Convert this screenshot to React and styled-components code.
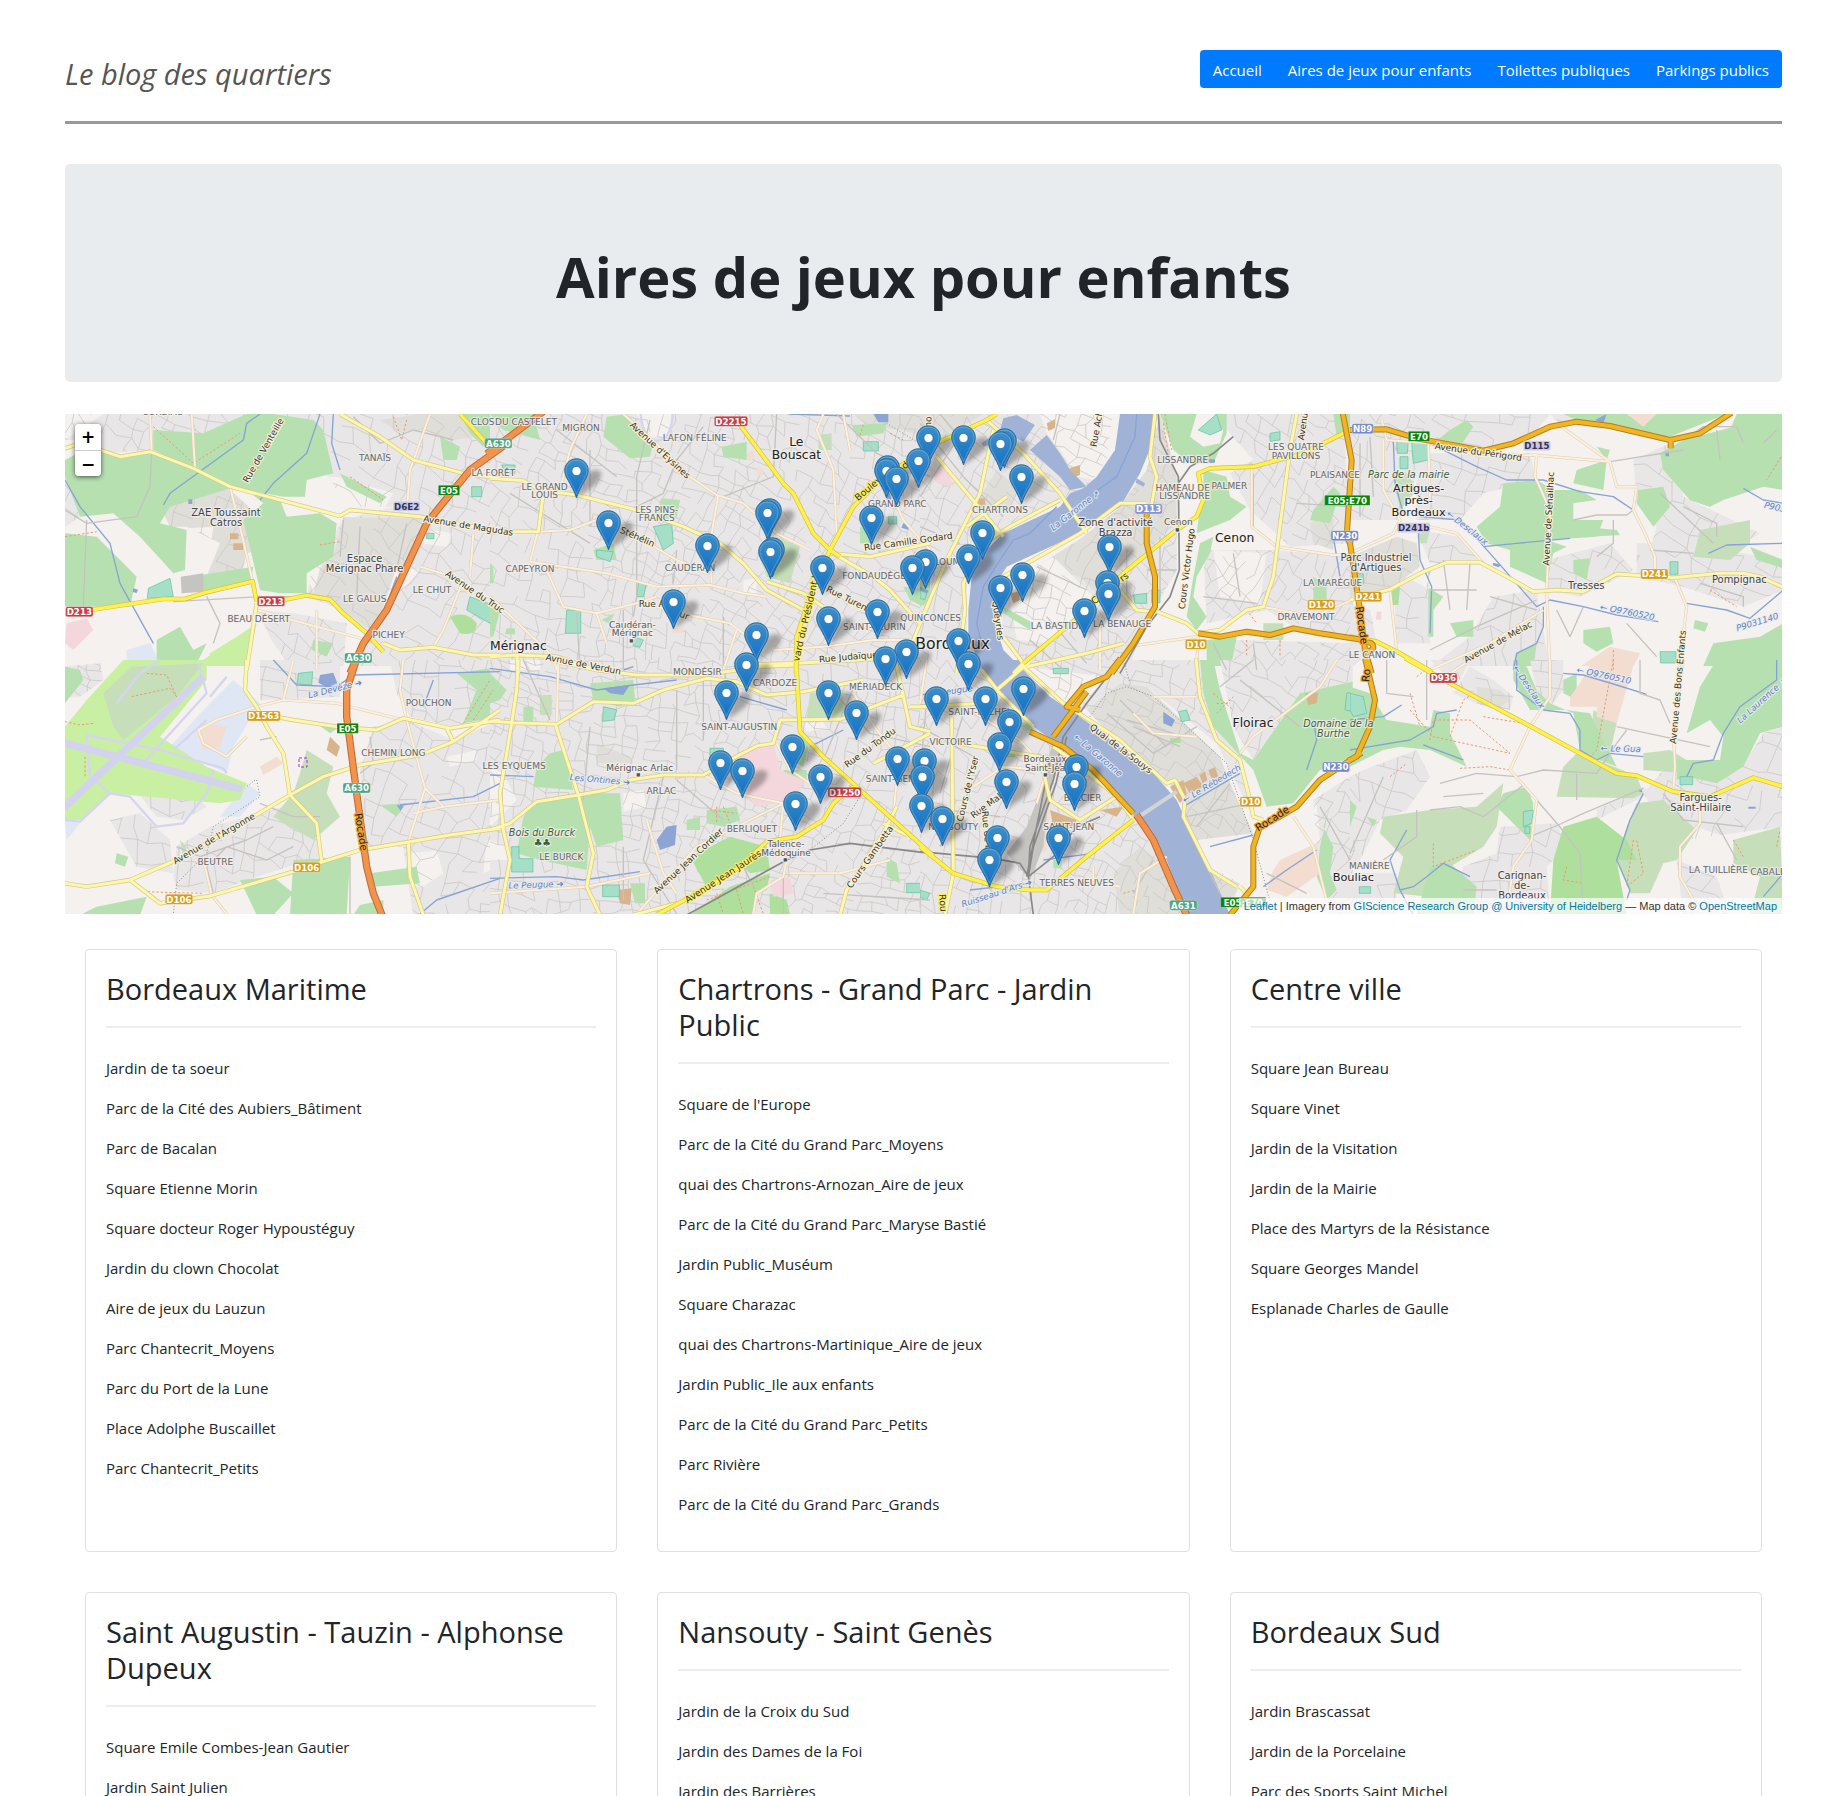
import React from "react";
import styled, { createGlobalStyle, css } from "styled-components";

const GlobalStyle = createGlobalStyle`
  *, *::before, *::after { box-sizing: border-box; }
  body {
    margin: 0;
    background: #fff;
    color: #212529;
    font-family: "Open Sans", "Noto Sans", sans-serif;
    font-size: 15px;
    line-height: 24px;
  }
`;

/* ---------- page ---------- */

const Page = styled.div`
  padding: 50px 62px 0 65px;
`;

const Header = styled.header`
  display: flex;
  justify-content: space-between;
  align-items: flex-start;
  height: 74px;
  border-bottom: 3px solid #999;
`;

const SiteName = styled.p`
  margin: 4px 0 0;
  color: #555;
  font-size: 29px;
  line-height: 40px;
  font-style: italic;
`;

const Nav = styled.nav`
  display: flex;
  background: #007bff;
  border-radius: 4px;
`;

const NavLink = styled.a`
  padding: 8px 13px 6px;
  color: #fff;
  text-decoration: none;
`;

const Banner = styled.section`
  margin-top: 40px;
  padding: 79px 32px 73px;
  background: #e9ecef;
  border-radius: 5px;
  text-align: center;
`;

const BannerTitle = styled.h1`
  margin: 0;
  font-size: 56px;
  line-height: 66px;
  font-weight: 700;
`;

const Columns = styled.div`
  display: grid;
  grid-template-columns: repeat(3, minmax(0, 1fr));
  gap: 40px;
  padding: 35px 20px 20px;
`;

const Card = styled.section`
  padding: 21px 20px 19px;
  border: 1px solid #dfdfdf;
  border-radius: 4px;
`;

const CardTitle = styled.h2`
  margin: 0 0 28px;
  padding-bottom: 19px;
  border-bottom: 2px solid #ededed;
  font-size: 29px;
  line-height: 36px;
  font-weight: 400;
`;

const Places = styled.ul`
  margin: 0;
  padding: 0;
  list-style: none;
`;

const Place = styled.li`
  margin-bottom: 16px;
`;

/* ---------- map ---------- */

const MapBox = styled.section`
  position: relative;
  height: 500px;
  margin-top: 32px;
  overflow: hidden;
  background: #f4f1ee;
`;

const MapDrawing = styled.svg`
  display: block;
  width: 100%;
  height: 100%;
`;

const ZoomBar = styled.div`
  position: absolute;
  top: 10px;
  left: 10px;
  display: flex;
  flex-direction: column;
  border-radius: 4px;
  box-shadow: 0 1px 5px rgba(0, 0, 0, 0.65);
  overflow: hidden;
`;

const ZoomButton = styled.button`
  width: 26px;
  height: 26px;
  padding: 0;
  border: 0;
  background: #fff;
  color: #000;
  font: 700 17px/24px "DejaVu Sans", sans-serif;
  & + & { border-top: 1px solid #ccc; }
`;

const Credits = styled.div`
  position: absolute;
  right: 0;
  bottom: 0;
  padding: 0 5px;
  background: rgba(255, 255, 255, 0.7);
  color: #333;
  font: 11px/16px "Liberation Sans", Arial, sans-serif;
  a { color: #0078a8; text-decoration: none; }
`;

const PinButton = styled.button`
  position: absolute;
  width: 25px;
  height: 41px;
  margin: -13px 0 0 -13px;
  padding: 0;
  border: 0;
  background: none;
  svg { display: block; }
`;

const labelKinds = {
  suburb: css`font-size: 27px; fill: #666; stroke: #f1efeecc;`,
  place: css`font-size: 30px; fill: #444;`,
  town: css`font-size: 34px; fill: #222;`,
  city: css`font-size: 37px; fill: #222;`,
  capital: css`font-size: 47px; fill: #222;`,
  station: css`font-size: 27px; fill: #555;`,
  stop: css`font-size: 13px; fill: #555;`,
  road: css`font-size: 27px; fill: #333; stroke: #f8f1d8;`,
  boulevard: css`font-size: 28px; fill: #333; stroke: #fdf060;`,
  ring: css`font-size: 31px; fill: #222; stroke: #f2a430;`,
  park: css`font-size: 29px; fill: #3c5f42; font-style: italic;`,
  water: css`font-size: 26px; fill: #6381b8; font-style: italic; stroke: #e8edf5cc;`,
};

const Label = styled.text`
  font-family: "DejaVu Sans", sans-serif;
  text-anchor: middle;
  paint-order: stroke;
  stroke: #f4f1eecc;
  stroke-width: 7px;
  stroke-linejoin: round;
  ${(p) => labelKinds[p.$kind]}
`;

const ShieldText = styled.text`
  font: 700 26px "DejaVu Sans", sans-serif;
  text-anchor: middle;
  fill: ${(p) => (p.$dark ? "#333355" : "#fff")};
`;

const areaFill = {
  urban: "#e8e6e6",
  works: "#dfded9",
  light: "#f4f1ee",
  forest: "#b7e0b1",
  scrub: "#c6dfba",
  bright: "#aedf9d",
  airfield: "#c9efa3",
  apron: "#dfe7f4",
  pitch: "#a6dfc8",
  heath: "#f2ddd0",
  clinic: "#f3d7dc",
  yard: "#c6c4c1",
  brown: "#d8b48c",
  lake: "#8ca5d4",
  river: "#a0b3d7",
};

const lineStyle = {
  water: [["#86a3d6", 4]],
  path: [["#e99a6b", 3, "7 6"]],
  edge: [["#8d8d8d", 3, "3 6"]],
  minor: [["#c6c2c0", 4]],
  taxi: [["#d6d5f1", 7]],
  runway: [["#d3d2ef", 22]],
  tertiary: [["#dccdb8", 9], ["#fdf0da", 6]],
  rail: [["#888", 5]],
  secondary: [["#d3c98c", 13], ["#fdf6ab", 9]],
  primary: [["#cfc04c", 14], ["#fff04c", 10]],
  trunk: [["#b27f1c", 18], ["#f1b524", 12]],
  motorway: [["#bd6a34", 22], ["#f2934d", 16]],
  bridge: [["#d3d4da", 12]],
};

const areaOrder = ["apron", "airfield", "scrub", "forest", "bright", "heath", "clinic", "yard", "brown", "river", "lake", "pitch"];
const lineOrder = ["taxi", "runway", "water", "edge", "path", "minor", "bridge", "tertiary", "rail", "secondary", "primary", "trunk", "motorway"];

/* Each sheet covers 440 x 260 map units, drawn at three times that scale. */
const sheets = [
  {
    x: 60, y: 410, angle: 24, cell: 44,
    areas: {
      urban: "M15,90V12H560L540,60L480,50L430,90L380,180L280,120L130,130L60,90Z M15,200L70,290L60,320L15,350Z M600,12H1320V780H880L920,670L850,600L740,560L760,470L850,330L1000,290L860,290L800,190L780,60Z M590,600L700,610L860,640L850,780H700L640,700Z",
      light: "M15,12H130L60,60L15,90Z M660,250L740,255L740,205L830,200L1000,250L970,300L860,300L800,360L750,350L690,320Z M380,355L460,350L440,490H375Z M740,490L790,440L760,550Z M1120,360L1180,370L1160,410L1080,400Z M1010,470L1080,480L1010,560L960,620Z",
      works: "M850,322L1090,325L1040,480L930,660L850,600L750,550V500L820,440Z M300,290L420,240L500,230L610,330L600,420L560,430L540,510L440,500L480,400L380,350H330Z M960,30L1080,12H1200L1250,80L1180,90L1090,60L1020,70Z",
      forest: "M280,60L430,70L560,12H640L760,30L790,60L820,190L740,210L735,260L670,260L510,230L400,175L280,120Z M15,150L90,110L160,140L280,130L400,180L510,235L430,260L330,290L300,340L380,360L375,480L340,490L240,380L160,310L60,320L15,200Z M560,240L660,270L680,320L780,310L830,340L820,440L740,490V550L660,550L600,540L550,330L610,280Z M15,370L110,380L190,460L230,500L210,590H15Z M1200,12H1320V60L1270,110L1230,70Z M390,500L580,470L570,515L430,545Z M840,190L900,220L980,260L960,280L860,230Z M1140,80L1200,110L1190,150L1150,150Z M290,690L360,650L400,720L440,700L400,780H290Z M760,690L820,700L800,740L755,720Z",
      airfield: "M400,770L590,640L560,780H390Z M450,730L580,650L540,740L440,780Z",
      apron: "M200,720L270,700L300,760L280,780H200Z",
      clinic: "M20,640L80,625L100,660L70,690L40,720L15,700Z",
      brown: "M510,370h25v18h-25z M520,400h30v20h-30z",
      yard: "M362,500L430,490V545L365,550Z",
      pitch: "M265,535L330,505L340,560L262,565Z M1235,230h30v30h-30z M1230,560L1310,590L1290,640L1220,600Z M1100,370h22v16h-22z",
      bright: "M1170,620Q1220,600 1250,640Q1250,680 1200,670Z",
      lake: "M385,268h12v14h-12z M220,535l14,4-4,10-12-3z",
    },
    lines: {
      water: "M15,210L60,290L150,400L180,520L280,700 M310,285L330,250L550,90L560,40L600,12 M820,12L815,100L840,180 M600,270L640,220L740,130L780,12 M1010,500L960,640",
      path: "M280,50L400,160L540,70 M580,200L650,60 M15,380L110,365 M780,405L840,395 M870,200L970,270 M1000,20L1025,90L1040,30",
      minor: "M275,125L270,230L230,320L80,340L15,300 M80,330L70,590 M740,560L600,560L340,575 M440,560L480,640L460,700 M1180,90L1060,60L960,100L880,20 M850,330L840,440 M900,350L890,560 M1040,340L1010,480",
      tertiary: "M270,12L275,125 M395,12L405,175 M510,230L540,350L578,514 M1110,12L1050,180L1040,310 M590,600L770,650L960,700 M1080,470L1210,510L1150,660L1120,710 M1240,370L1230,500 M770,600V780",
      secondary: "M15,115L60,100L180,140L270,125L400,175L510,230L840,318L870,300L1080,320L1320,365 M840,12L960,80L1060,150L1210,190L1320,205 M590,580L575,680L560,780 M970,700L1020,720L1120,712L1240,735H1320",
      primary: "M15,612L110,597L310,567H375L435,548L578,514L590,575 M660,572L740,556L810,568L850,610L920,670L970,725 M1200,12L1280,100",
      motorway: "M1330,108L1230,180L1140,290L1100,340L980,600L910,700L870,790",
    },
    labels: [
      [307, 16, "CORBIAC", "suburb"], [610, 130, "Rue de Venteille", "road", -60], [945, 154, "TANAÏS", "suburb"],
      [1268, 44, "CLOS", "suburb"], [1300, 198, "LA FORÊT", "suburb"], [498, 319, "ZAE Toussaint", "place"], [498, 349, "Catros", "place"],
      [914, 456, "Espace", "place"], [914, 486, "Mérignac Phare", "place"], [1116, 549, "LE CHUT", "suburb"], [914, 577, "LE GALUS", "suburb"],
      [596, 636, "BEAU DÉSERT", "suburb"], [986, 685, "PICHEY", "suburb"], [1225, 356, "Avenue de Magudas", "road", 9], [1245, 555, "Avenue du Truc", "road", 34],
    ],
    shields: [[1167, 241, "E05", "e"], [1040, 289, "D6E2", "t"], [58, 605, "D213", "p"], [633, 574, "D213", "p"], [895, 744, "A630", "m"]],
  },
  {
    x: 60, y: 660, angle: 12, cell: 44,
    areas: {
      urban: "M15,20L120,10L130,60L60,110H15Z M340,650L350,560L450,500L600,460L700,430L780,500V590L560,660L460,700L350,690Z M940,200L1040,180L1180,240L1320,180V770H1060L1030,560L920,560L900,330Z M990,0H1320V170L1180,200L1050,170L1010,100Z M600,0H840V110L600,120Z M150,480L240,460L330,540L340,640L230,620Z M220,380L300,360L400,400L440,440L370,480L290,470Z",
      light: "M1050,580L1130,570L1150,640L1090,680H1055Z M1280,540H1320V620L1270,640Z M1160,290L1250,270V300L1170,320Z",
      airfield: "M15,300V200L80,120L190,0H440L440,60L300,230L440,320L560,370L540,420L480,430L150,400L60,480L15,480Z",
      apron: "M330,260L430,150L520,60L600,130L520,260L500,340Z M560,370L600,400L540,470L480,470Z M15,480L60,490L20,540Z",
      scrub: "M215,20L430,10L350,110L190,240L160,200L130,100Z M740,270L820,320L800,400L840,470L760,540L640,470L700,400L720,340Z M360,540L380,560L370,590Z",
      forest: "M15,20L60,30L70,60L15,130Z M700,600L870,590L860,765H690Z M540,660L640,650L700,700L640,765H590Z M930,640L1070,620L1080,670L940,680Z M110,740L260,710L240,765H60Z M770,190L840,200L810,220Z M900,735L970,720V765H880Z M1190,40L1320,20V170L1210,190L1250,90Z M170,580L205,590L195,620L165,610Z M960,435L1040,430L1010,470Z",
      brown: "M810,230L840,260L830,290L800,270Z",
      heath: "M430,190L500,200L480,260L430,270L415,230Z M600,320L650,290L670,310L610,345Z",
      pitch: "M715,40L758,35L755,75L712,72Z",
      lake: "M780,45L820,38L832,70L800,82L775,68Z M1010,435l20,2-8,16z",
    },
    lines: {
      runway: "M10,248L545,388 M10,445L430,50",
      taxi: "M15,480L60,485L150,400L210,410L290,500L370,490L440,400L460,330 M80,225L300,270L490,325L500,340 M240,320L440,100L415,10 M80,225L90,350L150,400 M170,130L240,40L300,0 M340,270L440,180 M450,110L500,50",
      water: "M640,0L710,75L830,80L880,45L1320,35 M1020,435L1240,410L1320,370 M1080,762L1130,720L1320,655 M1120,60L1090,140",
      path: "M215,110L330,85L350,110 M15,185L60,195L100,190 M75,290V350 M250,695L430,700 M260,40L320,45L350,110 M1210,190L1290,60 M1240,180L1300,90",
      edge: "M590,360L600,410L460,500L440,580L350,670L340,762 M585,360L560,380",
      minor: "M350,560L420,590L560,540L640,500 M460,700L440,620L500,560L620,600L700,560 M870,590V762 M930,230L940,310L900,340 M600,240L650,230 M600,430L700,470L780,470",
      tertiary: "M700,0L670,120L830,130L1030,180 M670,120L590,140 M430,250L415,210L470,180L590,140 M430,250L500,290L560,230 M1030,0L1020,90L1040,180L1095,385L1045,545 M430,600L455,705L500,762 M1095,385L1150,440L1320,420 M1150,440L1060,460",
      secondary: "M15,670L80,680L210,660L350,600L580,470L690,405L790,350L900,315L1080,285L1180,245L1320,150 M210,660L300,730L450,708L700,635L790,605L900,570L1050,545L1170,525L1320,505 M560,0L555,90L590,140L620,200L670,280L690,405L770,490L785,605 M590,160L700,180L830,200L950,210L1030,175L1170,205L1320,180 M1045,545L1050,650L1090,765 M1160,205L1180,245",
      motorway: "M892,-10L860,90V170L890,400L920,620L940,700L968,770",
    },
    labels: [
      [825, 95, "La Devèze ➔", "water", -14], [1106, 137, "POUCHON", "suburb"], [1000, 288, "CHEMIN LONG", "suburb"],
      [462, 545, "Avenue de l'Argonne", "road", -30], [466, 615, "BEUTRE", "suburb"], [902, 525, "Rocade", "ring", 81],
    ],
    shields: [[611, 168, "D1563", "s"], [863, 205, "E05", "e"], [890, 384, "A630", "m"], [740, 622, "D106", "s"], [357, 718, "D106", "s"]],
  },
  {
    x: 490, y: 410, angle: 22, cell: 33,
    areas: {
      urban: "M-5,0H1330V790H-5Z",
      works: "M1100,12H1320V90L1240,60L1130,50Z",
      light: "M760,510L800,505V550L760,555Z M1210,395h40v30h-40z M440,12h110l-20,70h-50z",
      forest: "M350,20L410,12L490,100L480,140L420,145L340,80Z M0,12H130L150,90L40,60Z M695,110L770,95V150L700,140Z M1085,45L1190,40L1180,70L1100,80Z M515,265L570,270L560,320L500,330Z M1240,530L1320,540V600L1260,570Z M0,460L10,470V520H0Z M0,590L30,600L10,680H0Z M310,420L370,400L380,450L320,450Z M335,630l40-20-20,30z M50,655h25v18H45z M1110,350L1160,370L1150,400L1110,400Z",
      scrub: "M985,75L1025,70V120H985Z M860,380L930,410L900,520L830,500L810,440Z",
      pitch: "M490,350L545,340L550,400L520,420Z M230,600h42v70h-46z M35,165l40,0 0,25-30,0z M1120,95h45v28h-45z M320,420L370,425L360,455L320,440Z M445,520h25l-10,40h-20z M430,680l30,10-10,22-20-5z M1195,320h25v22h-25z",
      lake: "M1150,12h45v25h-30z M1190,235h15v35h-15z M1240,340l20,5-6,14-20-6z",
      heath: "M770,130l20-8 6,22-20,8z M800,175h20v20h-20z M548,655h30v15h-30z",
    },
    lines: {
      water: "M900,12L1080,18 M400,780L430,770",
      path: "M1110,75L1120,45 M1200,70L1240,90",
      minor: "M480,30L440,200V560L430,620 M640,50L560,150L520,250L420,300 M860,12L850,200L700,260 M1040,12L1160,130L1320,200 M60,250L300,400 M300,120V350 M200,60L380,200 M560,420L550,520 M700,620V780 M260,610L270,780 M400,600V780",
      edge: "M1190,40L1280,95",
      taxi: "M452,12Q460,95 505,92Q545,85 548,12",
      tertiary: "M290,12L240,120L210,240 M400,12L520,120L600,200L680,255L760,280L860,370L960,420 M685,255L660,400L665,520 M0,370L145,365L240,360L320,330L400,355L560,450L650,490 M120,455L350,490L500,530L660,525L760,550L830,560 M120,455L160,300 M165,470L220,590L320,610L440,580L500,560 M500,590L620,620L720,640L800,700 M1000,12L980,60L1030,180L1040,370 M850,720L1000,710L1150,690H1280 M740,660L700,780 M320,610L350,700 M1080,120L1060,12 M1180,200L1240,330L1320,420 M200,780L190,740L0,560",
      secondary: "M0,205L100,212L150,240L260,255L440,300L580,350L690,400L760,460L830,540L940,600 M0,365H145L160,250 M1020,425L1150,500L1200,540L1290,640 M830,515L940,550L1000,590 M85,790L80,735L200,740L320,780 M80,735L0,740 M1020,430L1140,440L1320,400 M730,765L920,760L1200,745L1320,700 M1270,690L1320,570",
      primary: "M750,45L880,220L910,250L970,370L1020,420L1050,440 M1020,420L960,560L920,680L918,790 M1020,420L1090,290L1180,200L1260,150L1330,90",
      motorway: "M160,5L-10,132",
    },
    labels: [
      [108, 44, "DU CASTELET", "suburb"], [273, 62, "MIGRON", "suburb"], [510, 130, "Avenue d'Eysines", "road", 43], [614, 94, "LAFON FÉLINE", "suburb"],
      [919, 107, "Le", "city"], [919, 146, "Bouscat", "city"], [164, 239, "LE GRAND", "suburb"], [164, 264, "LOUIS", "suburb"],
      [500, 309, "LES PINS-", "suburb"], [500, 334, "FRANCS", "suburb"], [442, 390, "Stéhélin", "road", 24], [120, 487, "CAPEYRON", "suburb"],
      [600, 483, "CAUDÉRAN", "suburb"], [485, 590, "Rue A", "road"], [575, 622, "eur", "road", 20], [427, 653, "Caudéran-", "station"], [427, 679, "Mérignac", "station"], [424, 697, "■", "stop"],
      [85, 719, "Mérignac", "city"], [950, 625, "vard du Président W", "boulevard", -77], [1135, 245, "Boulev", "boulevard", -40], [1245, 175, "d", "boulevard", -40],
      [1222, 290, "GRAND PARC", "suburb"], [1255, 404, "Rue Camille Godard", "road", -8], [1152, 506, "FONDAUDÈGE", "suburb"], [1085, 582, "Rue Turenne", "road", 27],
      [1153, 659, "SAINT-SEURIN", "suburb"], [1075, 750, "Rue Judaïque", "road", -5], [280, 772, "Avnue de Verdun", "road", 11], [1322, 634, "QUINCONCES", "suburb"], [1315, 45, "no", "road", -88],
    ],
    shields: [[25, 100, "A630", "m"], [723, 34, "D2215", "p"]],
  },
  {
    x: 490, y: 660, angle: 10, cell: 33,
    areas: {
      urban: "M-5,0H1330V770H-5Z",
      light: "M0,320L40,340L80,420L0,500Z M400,400L460,390L470,440L400,455Z M60,0h90v30h-90z M0,540L60,560V600H0Z M940,190l60-4 10,20-60,10z",
      works: "M320,250L420,290L430,310L320,310Z",
      forest: "M300,70L430,60L435,120L390,140L310,120Z M140,320L180,280L220,270L240,340L250,390L130,380Z M130,430L250,400H390L400,540L320,560L300,500L290,630L150,600L80,580L100,470Z M590,480L630,470L630,510L590,510Z M650,450L740,440L750,480L700,500L650,490Z M0,40L50,90L30,120L0,130Z M100,140h30v45h-30z M880,330h70v30h-60z M420,670h45v60h-30z M930,230l30,10-20,80-20-10z M1190,590l30,20 10,60-40-20z",
      scrub: "M960,100L1060,90V170L950,175Z M150,105h35v60h-35z",
      bright: "M600,590L720,530L830,560L840,630L780,640L760,620L650,680Z M600,765L720,680L840,640L830,690L800,700L790,765Z M840,700L890,720L900,765H840Z",
      clinic: "M720,290L850,250L870,330L940,360L920,420L800,440L760,400L800,350Z M840,660L900,650L910,700L850,710Z",
      heath: "M780,370L840,350L820,410L780,420Z",
      brown: "M380,690l45-5-5,50-30-5z",
      lake: "M500,540L530,500L560,495L555,555L510,570Z M340,85L420,75L400,105L360,100Z",
      pitch: "M65,560h22v36h42v40H65z M340,140l40,10-8,30-34,4z M338,675h50v35h-50z M1250,670h50v28h-50z M660,265h40v30h-40z",
    },
    lines: {
      water: "M0,25L180,50L320,90L430,75L560,60 M750,110L890,150 M0,655L200,650L280,660L450,635 M960,260L1060,210 M0,345L130,350",
      path: "M650,720L840,650 M680,700L700,762 M740,690L760,762 M790,680L820,762 M660,450L740,460 M680,440V490 M700,440L720,490",
      minor: "M100,0L180,180 M300,200L280,420 M520,350L460,600L560,762 M560,360L700,480 M560,90V330 M640,60V240 M400,560V720 M1000,60L1140,220L1320,260 M1100,60L1000,300 M880,650V762 M700,20L720,120 M760,620L790,680 M1000,700L1320,720",
      edge: "M960,570L1060,490L1110,410",
      tertiary: "M205,0L200,190 M440,762L620,560L880,430 M470,480L520,640L560,700 M890,600L880,650L800,700L790,762 M0,700L290,680L480,640 M860,250L900,330L960,370 M900,640L1050,640L1200,600 M640,345L740,400L880,430 M880,430L870,540 M1090,100L1160,210L1240,310 M1220,360L1210,470",
      secondary: "M85,0L80,90L65,190L30,400L40,510L60,600L30,765 M0,183L65,188L200,193L310,125L430,130L520,90L650,55L740,65L830,105L940,95L1120,60 M195,190L265,405L310,580L290,680L330,765 M0,510L60,490L140,425L265,405L350,390L420,360L520,345H640L720,300L800,258L850,250L870,180L1050,178L1240,105 M180,0L320,30L440,45H640L810,20L920,15 M1050,765L1070,690L1180,520L1220,440 M1180,490L1250,525 M1215,-5L1260,200L1320,215 M1150,310L1320,220 M430,765L560,730 M1260,140H1320",
      primary: "M918,-5L930,215L1000,290L1100,380L1330,588 M500,765L640,690L750,620L830,545L920,530L1000,480L1030,430L1090,380",
      rail: "M590,765L890,600L960,570L1080,550L1320,580",
    },
    labels: [
      [622, 44, "MONDÉSIR", "suburb"], [855, 78, "CARDOZE", "suburb"], [1157, 89, "MÉRIADECK", "suburb"], [748, 209, "SAINT-AUGUSTIN", "suburb"],
      [72, 326, "LES EYQUEMS", "suburb"], [449, 332, "Mérignac Arlac", "station"], [445, 348, "■", "stop"], [330, 368, "Les Ontines ➔", "water", 5], [514, 403, "ARLAC", "suburb"],
      [1140, 272, "Rue du Tondu", "road", -36], [1218, 367, "SAINT-GENÈS", "suburb"], [156, 528, "Bois du Burck", "park"], [157, 558, "♣♣", "park"],
      [214, 601, "LE BURCK", "suburb"], [138, 683, "Le Peugue ➔", "water", -2], [786, 515, "BERLIQUET", "suburb"], [595, 612, "Avenue Jean Cordier", "road", -43],
      [700, 659, "Avenue Jean Jaurès", "boulevard", -33], [888, 561, "Talence-", "station"], [888, 587, "Médoquine", "station"], [886, 603, "■", "stop"], [1140, 600, "Cours Gambetta", "road", -55],
    ],
    shields: [[1064, 397, "D1250", "p"]],
  },
  {
    x: 920, y: 410, angle: 30, cell: 34,
    areas: {
      urban: "M-5,0H580L560,150L500,230L420,270L250,360L180,430L140,520V790H-5Z M560,370L660,440L770,340V480L700,600L620,780H330L250,680L240,520L400,440Z M850,420H1080L1040,600L860,640Z M880,12H1270L1290,400L1110,410L990,300L930,190L1000,150Z M1050,420L1320,440V690L1120,650L1040,600Z M940,690L1320,700V790H940Z",
      light: "M360,12H590L570,140L520,210L470,200L420,120L380,70Z M260,510L400,440L520,560L400,700L290,690Z M880,420L1040,430L1020,580L900,560Z",
      works: "M590,300L680,180L720,12L770,200V340L660,440L540,560L480,500L350,470L490,380Z M0,12H190L60,90L0,80Z M170,280L230,180L300,240L260,300Z M1170,340L1240,310V420L1180,400Z",
      forest: "M720,12H830L810,80L850,110L900,100L910,60L880,40L890,12H920V70L880,160L810,160L760,120Z M850,180L920,200L930,260L980,290L930,330L830,370L850,220Z M840,400L880,380L870,430L830,500L820,560L860,620L830,660L800,620L820,500Z M1180,300L1240,230L1260,250L1230,340L1170,330Z M860,690L950,680L930,790H860Z M250,590L340,640L330,660L250,610Z M0,490L30,500V570L0,590Z M1240,12H1320V60L1250,80Z M1180,500L1220,530V570H1180Z",
      scrub: "M150,540h30v10h-30z M1030,640L1090,640V690H1030Z",
      river: "M600,12L585,120L530,200L490,235L450,250L420,290L250,370L190,430L155,500L145,600V680L190,790H320L250,720L225,640V590L235,510L260,470L480,370L600,290L660,190L705,80L710,12Z M250,25L290,15L345,45L310,95L240,60Z M330,120L380,75L420,130L450,180L500,230L450,240L420,200Z M185,100L240,60L250,95L190,110Z M650,205l25,15-4,10-24-12z",
      brown: "M448,175L480,165V195L455,205Z M380,40l25-12v25l-20,10z M270,550l25-5 5,25-20,10z M172,265h24v24h-24z",
      clinic: "M30,180L80,170L100,230L50,220Z",
      pitch: "M835,60L890,12L905,60L870,75Z M640,555L680,550V580H645Z M695,540h25v38h-25z M1050,70l30-5v25l-30,4z M0,540l20,10-6,20-14-6z",
      lake: "M865,148h20v10h-20z M0,530l26,12-8,14-18-8z",
    },
    lines: {
      water: "M650,12L645,80L590,200L520,250 M410,290L330,370L280,390L240,450L190,530L170,640L190,720 M1240,380L1260,500",
      path: "M730,40L745,130 M980,600L1010,640 M735,12L755,120 M980,690V740 M1080,690V740",
      minor: "M0,40L130,200L250,320 M60,12L150,120 M130,60L0,260 M0,350L120,400 M420,12L400,90 M350,470L500,540 M620,420V560 M520,560L640,420 M720,380V560 M680,480H770 M1000,190V360 M850,560L1010,580 M1130,280L1290,290 M940,430L960,560 M880,700L920,780 M1000,700L1010,780 M380,620L500,760 M330,690L430,780",
      tertiary: "M995,170V350L1070,410L1240,435H1320 M0,500L180,430 M1030,590L1180,620L1320,560 M835,670L830,780 M620,710L830,680 M540,620V780",
      rail: "M715,12L720,90L775,200L778,480L750,560L680,650L600,790 M775,220L810,170L880,130L940,80",
      secondary: "M200,30L310,130L420,250L500,370 M50,140L200,320L250,380 M220,60L180,250L80,450L0,640 M110,790L135,600L130,520L190,400L270,350L420,270 M250,500L480,370L600,280H680 M705,12L690,140L710,200L690,310 M700,600L800,640L835,670L900,660L980,600L1030,590L1060,500L1110,120L1130,12 M320,770L500,730L610,700 M700,605L650,600L600,540 M250,680L310,760L280,790 M260,260L140,350",
      primary: "M0,120L60,95L200,30L230,12 M310,760L500,600L610,490L770,360L830,320L850,270L835,190L870,175L1000,170L1150,130L1270,70",
      trunk: "M680,310V400L705,500V590L640,700L575,790 M835,670L900,680L980,665L1050,675L1120,655L1200,670L1330,690 M1268,8L1295,150L1280,380L1290,400",
    },
    labels: [
      [530, 65, "Rue Ach", "road", -80], [788, 158, "LISSANDRE", "suburb"], [788, 242, "HAMEAU DE", "suburb"], [794, 267, "LISSANDRE", "suburb"], [928, 238, "PALMER", "suburb"],
      [1128, 120, "LES QUATRE", "suburb"], [1128, 146, "PAVILLONS", "suburb"], [1245, 205, "PLAISANCE", "suburb"], [1150, 50, "Avenue", "road", -82],
      [240, 310, "CHARTRONS", "suburb"], [465, 310, "La Garonne ➚", "water", -38], [587, 347, "Zone d'activité", "place"], [587, 377, "Brazza", "place"], [775, 346, "Cenon", "station"], [772, 362, "■", "stop"],
      [944, 395, "Cenon", "city"], [800, 485, "Cours Victor Hugo", "road", -83], [82, 466, "LOUM", "suburb"], [612, 510, "rs", "boulevard", -38], [525, 580, "C", "boulevard", -38],
      [412, 658, "LA BASTIDE", "suburb"], [606, 652, "LA BENAUGE", "suburb"], [98, 716, "Bordeaux", "capital"], [234, 640, "Quéyries", "road", 82],
      [1238, 527, "LA MARÈGUE", "suburb"], [1158, 630, "DRAVEMONT", "suburb"], [1368, 452, "Parc Industriel", "place"], [1368, 482, "d'Artigues", "place"],
    ],
    shields: [[686, 297, "D113", "nt"], [1282, 271, "E05;E70", "e"], [1274, 377, "N230", "n"], [1204, 584, "D120", "s"], [828, 703, "D10", "s"]],
  },
  {
    x: 920, y: 660, angle: 28, cell: 34,
    areas: {
      urban: "M-5,0H170L230,90L340,200L470,290L600,430L680,500L740,600L790,770H-5Z M310,0H840L850,100L960,280L1000,470L890,250L680,80L600,70L500,150L380,90Z M900,0H1320V60L1140,100L1000,300L940,200Z M1180,420L1320,330V770H1230L1190,560Z",
      light: "M310,20L560,50L490,130L400,110Z M830,550L1000,520L1190,430L1200,540L1040,640L1000,690L870,630Z",
      works: "M500,150L600,70L680,80L900,290L930,370L1000,520L830,540L790,460L780,400L700,330L600,250Z M660,560L740,620L780,765H600L580,640Z M870,620L960,670L930,740L880,680Z",
      forest: "M840,0H880L900,90L960,280L1000,300L1140,100L1320,60V280L1200,330L1120,430L1040,440L1000,330L880,200L850,100Z M1230,440L1210,500L1240,560L1230,640L1250,690L1220,720L1190,650L1200,560Z M400,600h25v25h-25z M300,180L350,210L330,215L300,195Z",
      scrub: "M1200,260L1320,200V280L1200,330Z",
      heath: "M1080,600L1190,550L1200,640L1100,710L1040,690L1060,630Z M360,420L390,440L380,570L330,600L310,560Z",
      yard: "M320,500L360,400L400,240L425,270L385,420L370,560L330,660L260,580Z",
      brown: "M750,380L790,360L800,400L780,430Z M790,370L830,350L850,380L810,400Z M838,345L855,335L862,360L848,370Z M865,330L885,322L895,350L875,358Z M390,450L470,480L460,500L400,500Z M1155,100L1195,98L1190,130L1165,135Z M540,450L610,440L590,470Z",
      river: "M165,-5L230,90L340,200L470,290L600,430L680,500L740,600L780,720L792,765H930L880,650L820,530L770,420L700,340L600,260L480,170L390,110L310,30L300,-5Z",
      lake: "M730,155L765,180L755,200L730,190Z",
      pitch: "M775,155L800,150L810,180L785,185Z M400,25h45v16h-45z M1280,100L1320,90V160L1275,150Z M0,690l30,10-10,20-20-8z",
      bright: "M750,235h32v14h-32z M250,270h35v22h-35z",
    },
    lines: {
      water: "M0,105L100,90L150,80 M790,440L960,340 M870,560L1000,525 M1030,680L1100,630L1190,570 M150,690L240,680L330,670 M370,600L520,580 M1180,180L1190,240L1160,330",
      edge: "M510,170L560,100L620,80L700,110L800,200L920,310L1000,540L1060,762 M610,0L630,70",
      path: "M880,100L940,150 M890,130H930 M890,160L940,110 M610,700L650,690",
      minor: "M560,160L700,280L830,200 M620,180L760,220 M600,120L740,260 M780,260L640,200 M830,500L930,370 M800,470L990,430 M0,200L180,300 M20,120L0,350 M130,160L60,400 M180,330L60,560 M0,440L240,470 M960,60L1140,200 M1000,0L900,80 M1040,640L1160,700 M1200,440L1290,600 M640,700L700,600 M850,600L900,700",
      tertiary: "M20,0L0,130 M150,150L300,240L380,330L350,430 M640,160L700,220L830,230 M700,110H830 M1250,0L1200,80L1000,230L960,280 M160,380L250,320L380,330 M1120,470L1180,560L1230,762 M640,762L660,640L740,590 M520,620V660L600,680",
      bridge: "M660,468L770,395",
      rail: "M600,0L500,130L430,230L400,360L330,560L325,650L340,765 M440,230L408,370L340,560L325,650 M390,300L350,500L320,650 M0,575L220,595L300,610L325,650 M325,650L400,590L470,500L540,470",
      secondary: "M230,90L300,30L330,5 M185,30L240,100L340,200 M400,260L470,310L590,410L640,480 M310,20L430,130L600,240L740,370L765,360L795,420L790,470L870,630L950,680 M828,-5L840,110L890,240L960,300L985,400L1000,470L1030,480 M100,640L75,765 M95,170L100,640 M0,140L190,130L230,95 M110,250L360,290L390,420L480,480L590,410 M960,680L980,700",
      primary: "M640,480L500,590L380,690H330L230,680L100,640L0,560",
      trunk: "M602,-5L560,50L490,80L440,140L480,150 M500,95L400,230 M330,215L430,260L520,330L640,460 M1325,278L1200,360L1130,440L1070,475L1020,500L1000,560V680L930,765",
      motorway: "M650,465L700,540L760,680L802,770",
    },
    labels: [
      [110, 100, "Peugue", "water", -8], [180, 165, "SAINT-MICHEL", "suburb"], [92, 256, "VICTOIRE", "suburb"], [143, 395, "Cours de l'Yser", "road", -76], [218, 432, "Rue Malbec", "road", -36],
      [200, 520, "Rue de L", "road", 84], [380, 306, "Bordeaux-", "station"], [384, 332, "Saint-Jean", "station"], [376, 348, "■", "stop"], [488, 422, "BELCIER", "suburb"], [100, 511, "NANSOUTY", "suburb"],
      [446, 511, "SAINT-JEAN", "suburb"], [470, 679, "TERRES NEUVES", "suburb"], [230, 708, "Ruisseau d'Ars ➔", "water", -18], [535, 295, "← La Garonne", "water", 40], [603, 275, "Quai de la Souys", "road", 37],
      [999, 202, "Floirac", "city"], [1255, 201, "Domaine de la", "park"], [1240, 231, "Burthe", "park"], [875, 380, "← Le Rébedech", "water", -31], [1058, 486, "Rocade", "ring", -33], [1348, 626, "MANIÈRE", "suburb"], [1300, 662, "Bouliac", "town"], [68, 738, "Rou", "boulevard", 86],
    ],
    shields: [[1248, 321, "N230", "n"], [992, 425, "D10", "s"], [790, 736, "A631", "m"], [970, 727, "E05;E70", "e"]],
  },
  {
    x: 1350, y: 410, angle: 18, cell: 46,
    areas: {
      urban: "M0,12H600L560,60L420,120L250,90L140,330H0Z M230,130H540L560,210L400,250L330,330H200V200Z M200,360L330,380L400,460H240Z M590,450L780,400L850,480L690,560L590,540Z M850,150L960,100L1000,260L1230,370L1180,400L1030,440L900,420L920,350L860,280Z M430,560L560,540L600,780H230L360,680Z M860,400L1000,400L1300,450V540L1180,590L1000,530L860,500Z M130,480L240,540V700L140,700Z M0,580L60,600L80,700L0,780Z M600,12H700L640,50Z",
      works: "M0,440L140,380L200,400L210,470L100,550L0,560Z",
      forest: "M930,130L1000,90L1300,12V240L1240,230L1120,270L1080,290L1020,270L940,180Z M1160,12H1300V110L1140,60Z M640,12H1130L960,80L820,60L700,40Z M460,220L560,210L610,240L690,240L740,270L670,280V330H760L740,380L590,390L650,410L610,430L590,520L480,470V420L410,400L380,350L450,290Z M680,180L770,150L760,240L670,220Z M1090,700L1230,680L1300,640V790H1050Z M700,660L780,650L790,700L740,725L700,700Z M670,450L720,445L710,510L670,490Z M865,240L940,230L960,290L910,350L860,280Z M245,470L230,530L280,560L250,600V680L235,680V480Z M1035,630L1075,640L1065,665L1030,655Z M1200,410L1300,450V475L1220,450Z M300,640L370,630V680L320,680Z M350,30L370,50L330,110L250,100L300,60Z M740,110L780,120L770,150Z M700,350L800,360L810,375L720,380Z M500,730L560,700L550,780H490Z",
      scrub: "M1040,130L1130,140L1110,190L1080,290L1020,270Z M1200,140L1290,160L1250,220L1200,220Z M1050,360L1200,330V400L1140,450L1030,440Z M200,340L240,360L230,400L210,400Z M130,180L170,190L200,240L150,300L130,200Z",
      pitch: "M140,95L175,92L172,130L142,130Z M185,95L240,90L235,150L190,160Z M150,140h24v36h-24z M960,455h24v38h-24z M930,725h48v34h-46z M20,490l20,2v30l-20,4z",
      heath: "M690,770L780,710L870,730L840,790H690Z M830,12H920L880,50Z",
      bright: "M120,545L150,530L145,585H120Z",
      clinic: "M80,605h14v24h-16z",
      lake: "M735,30L770,12L760,40Z M430,458l22,6-6,8-18-6z M945,125h12v14h-10z",
    },
    lines: {
      water: "M240,100L380,170L470,210L580,210L690,245L790,260L850,300 M210,320L330,330L420,430L560,590L600,570L700,590L800,615L925,635 M400,410L500,400L660,385 M240,670L245,530L210,450L205,370 M1010,580L1130,600L1200,625L1300,540 M1075,430L1130,405L1300,400 M580,590V650L560,700L500,730L490,780 M1180,235L1240,270L1300,280 M130,95L135,220L160,310",
      path: "M1300,130L1250,210 M1080,540L1160,590 M790,720V780",
      minor: "M670,330L740,315H830L850,300 M740,440L790,400V330 M780,155L1000,120 M1000,90L1060,50H1160L1180,100 M1000,290L1100,340V380 M930,250L1090,400 M1100,60L1110,150 M900,420L1030,430 M1050,520L1180,560V590 M420,560L560,600 M280,450L300,600 M360,460L350,600 M240,540H380 M240,720L380,650L560,570 M620,600L660,680L700,590 M830,640L920,740 M1240,100L1280,60 M30,100V320 M60,80L70,260",
      tertiary: "M560,130L555,200L600,300L590,540L600,790 M110,90L240,100L400,140L550,135L780,155L800,230H860L850,300L885,370L915,440V490 M620,40L780,155 M975,505L1010,590L985,790 M240,350L320,370L400,460 M0,430L130,370L150,330L100,240V90 M580,600L420,700L240,780 M120,540L140,720 M235,100L240,260 M110,90L95,30",
      secondary: "M0,570L120,538L210,490L290,457H390L470,500L550,545L620,540L700,545L800,492L970,503L1110,490H1180L1230,500L1300,532",
      primary: "M0,680L80,695L150,730L245,785",
      trunk: "M0,60L110,58L200,85L400,122L490,100L600,50L680,35L780,48L960,90L1050,70L1145,8 M5,380L0,400L30,600L45,720L65,790 M962,90V115 M40,700Q70,690 70,715Q60,730 40,715",
    },
    labels: [
      [385, 135, "Avenue du Périgord", "road", 8], [176, 205, "Parc de la mairie", "park"], [206, 247, "Artigues-", "town"], [206, 283, "près-", "town"], [206, 318, "Bordeaux", "town"],
      [352, 362, "← Desclaux", "water", 38], [596, 335, "Avenue de Sénailhac", "road", -87], [709, 538, "Tresses", "place"], [1168, 518, "Pompignac", "place"], [832, 615, "← O9760520", "water", 11],
      [444, 705, "Avenue de Mélac", "road", -29], [66, 743, "LE CANON", "suburb"], [34, 655, "Rocade", "ring", 82], [50, 805, "Ro", "ring", -84], [1222, 645, "P9031140", "water", -17], [1275, 300, "P903", "water", 12],
    ],
    shields: [[38, 56, "N89", "n"], [207, 79, "E70", "e"], [561, 107, "D115", "t"], [191, 353, "D241b", "t"], [913, 492, "D241", "s"], [54, 560, "D241", "s"]],
  },
  {
    x: 1350, y: 660, angle: 15, cell: 46,
    areas: {
      urban: "M310,100L360,20L430,60L490,110L480,150L380,130Z M40,330L200,270L240,350L170,450L90,480L20,620H0V350Z M450,500L620,490L650,560L590,620L600,765H300L340,620L440,580Z M880,400L940,330H1170L1240,220L1300,200V500L1150,520L1000,540L900,430Z M540,0H640V90L600,140L560,90Z M740,450L880,380L900,400L740,480Z M240,0H360L330,60L280,40Z M980,600L1100,650L1140,765H1000Z M0,640H140V765H0Z",
      works: "M380,80L450,90L480,120L440,150L380,130Z",
      forest: "M0,80L60,100L110,180L240,200L250,150L300,160V220L350,320L240,270L150,260L100,270L0,320Z M490,0L530,20L560,90L600,130L670,160L690,270L720,290L800,320L780,280L740,200L720,160L650,150L540,150L490,60Z M1100,0H1300V200L1230,220L1180,320L1100,370L1010,350L980,360V300L1110,300L1120,230L1080,180L1010,220L1050,80Z M460,400L530,380L550,430L540,540L440,440Z M240,620L300,610L380,680L370,765H200Z M0,420L20,440L0,500Z M50,470L80,480L70,500Z M640,60L680,40V120L640,100Z",
      scrub: "M690,270L740,300L860,347L880,400L850,415L620,410L640,320Z M730,150L800,190L780,280L720,290Z M880,280L960,270L1010,300V340L880,330Z M100,470L240,450L380,440L460,370L440,500L400,560L300,620L240,710L130,700L160,590L90,520Z M860,430L940,420L1040,510L980,600L940,610L900,700H840L800,600L830,500Z M1150,540L1290,500L1300,765H1200L1230,650L1150,610Z",
      bright: "M640,500L740,470L830,540L860,600L800,600L830,765H600L610,600Z",
      light: "M1040,500L1150,540L1160,620L1040,620L1000,580Z M60,570L140,530L180,560L150,620L70,600Z",
      heath: "M690,70L730,0H855L800,190L740,170V140H660V110Z",
      pitch: "M520,455L550,450L545,490L520,500Z M0,100L40,110L50,160L10,170L0,150Z M990,350h38v24h-38z M28,680h34v20H28z M525,500h14v20h-14z",
      lake: "M1195,440h22v6h-22z M868,388h8v8h-8z",
    },
    lines: {
      water: "M0,270L60,260L180,240L250,200L260,160L320,150 M220,255L340,300 M640,40L700,45L800,75L890,103 M580,150L660,160L690,210V270L740,300L780,280L880,290 M880,400L840,480L800,600L840,690L830,720 M1010,350L1030,310L1090,300L1120,220L1170,140L1280,60V0 M170,510L120,600L150,690L190,680L230,650L280,610L360,650 M150,690L190,765 M500,0L500,90L580,150 M0,180L100,170L155,135 M1300,640L1240,710",
      path: "M180,150L250,230L480,280L360,180L250,180L240,240 M330,325L420,320L480,330 M790,0L740,270L720,290 M850,540L830,680L880,640L860,540 M300,230L340,120L370,100 M400,170L520,190 M250,550V620L380,570 M120,350L170,310 M650,620L640,660L700,670 M1280,560L1290,510 M200,50L240,20 M180,100L210,200 M1150,540L1180,590",
      minor: "M500,350L580,330L740,340L800,250L830,210 M560,420L625,495L700,460L880,385 M625,495L690,580L700,765 M625,495L540,530 M680,340V420 M270,370L380,340L500,350 M280,410L400,400 M240,450L330,440L400,470L520,375 M230,0V180 M110,0V100L190,110 M870,0V100L930,120L960,190 M800,200L1080,260 M940,400L1000,480L1180,500 M1100,490L1160,600 M200,450V530L100,600 M340,690H440 M0,580L100,350",
      tertiary: "M600,0V110L540,200L480,330L560,420L545,540L490,620L470,765 M1000,0L970,220L975,320L970,390L1050,450V490L990,560V650L1030,720 M300,40L360,0",
      primary: "M165,-5L300,70L540,198L800,340L860,347L970,395L1080,410L1210,353L1300,380",
      trunk: "M45,-5L75,120L60,200L20,290L-5,302",
    },
    labels: [
      [762, 55, "← O9760510", "water", 12], [537, 90, "← Desclaux", "water", 56], [984, 90, "Avenue des Bons Enfants", "road", -85], [812, 275, "← Le Gua", "water", 1],
      [1235, 130, "La Laurence ➚", "water", -42], [1052, 424, "Fargues-", "place"], [1052, 454, "Saint-Hilaire", "place"], [516, 656, "Carignan-", "place"], [516, 687, "de-", "place"], [516, 717, "Bordeaux", "place"],
      [1105, 638, "LA TUILLIÈRE", "suburb"], [1262, 645, "CABALEY", "suburb"],
    ],
    shields: [[280, 54, "D936", "p"]],
  },
];

const shieldFill = { m: "#4fa682", e: "#0a830a", p: "#cb3d43", s: "#d99c16", t: "#cac9ea", n: "#7489c9", nt: "#8794cd" };

const pins = [
  [577, 471], [609, 523], [708, 546], [674, 602], [770, 511], [768, 513], [773, 550], [771, 552], [823, 568], [872, 518],
  [888, 468], [887, 471], [897, 479], [919, 461], [929, 438], [913, 568], [926, 562], [829, 619], [878, 612], [757, 635],
  [886, 659], [907, 652], [747, 665], [727, 693], [829, 693], [857, 713], [793, 747], [721, 763], [743, 771], [821, 777],
  [796, 804], [898, 759], [925, 761], [923, 777], [922, 806], [964, 438], [1005, 441], [1001, 444], [1022, 477], [983, 533],
  [969, 557], [1110, 547], [1108, 583], [1109, 594], [1085, 611], [1023, 575], [1001, 588], [959, 641], [969, 664], [937, 699],
  [986, 699], [1024, 689], [1010, 722], [1000, 745], [1007, 782], [1077, 767], [1075, 784], [943, 819], [998, 838], [990, 860], [1059, 838],
].sort((a, b) => a[1] - b[1]);

/* Small residential streets: a jittered grid with some edges left out. */
function streetNet(seed, cell, angle) {
  let s = seed * 7919 + 17;
  const rnd = () => {
    s = (s * 16807) % 2147483647;
    return s / 2147483647;
  };
  const cols = Math.ceil(1900 / cell);
  const rows = Math.ceil(1700 / cell);
  const a = (angle * Math.PI) / 180;
  const grid = [];
  for (let r = 0; r < rows; r++) {
    grid.push([]);
    for (let c = 0; c < cols; c++) {
      const u = (c + rnd() * 0.6) * cell - 950;
      const v = (r + rnd() * 0.6) * cell - 850;
      const bend = a + Math.sin(u / 260) * 0.12 + Math.cos(v / 210) * 0.12;
      grid[r].push([
        Math.round(660 + u * Math.cos(bend) - v * Math.sin(bend)),
        Math.round(390 + u * Math.sin(bend) + v * Math.cos(bend)),
      ]);
    }
  }
  let d = "";
  for (let r = 0; r < rows - 1; r++) {
    for (let c = 0; c < cols - 1; c++) {
      const p = grid[r][c];
      if (rnd() < 0.68) d += `M${p}L${grid[r][c + 1]}`;
      if (rnd() < 0.62) d += `M${p}L${grid[r + 1][c]}`;
    }
  }
  return d;
}

const nets = sheets.map((sheet, i) => streetNet(i + 3, sheet.cell, sheet.angle));

function Sheet({ sheet, children }) {
  return <g transform={`translate(${sheet.x} ${sheet.y}) scale(0.33333)`}>{children}</g>;
}

function Shield({ x, y, text, kind }) {
  const width = text.length * 18 + 10;
  return (
    <g>
      <rect x={x - width / 2} y={y - 15} width={width} height={30} rx={kind === "e" ? 2 : 6} fill={shieldFill[kind]} stroke="#fff6" strokeWidth="2" />
      <ShieldText x={x} y={y + 10} $dark={kind === "t"}>{text}</ShieldText>
    </g>
  );
}

function CityMap() {
  return (
    <MapDrawing viewBox="65 414 1717 500" preserveAspectRatio="xMidYMid slice" role="img" aria-label="Carte de Bordeaux">
      <defs>
        <filter id="soft" x="-20%" y="-20%" width="140%" height="140%"><feGaussianBlur stdDeviation="2" /></filter>
        <clipPath id="frame"><rect x="0" y="0" width="1298" height="768" /></clipPath>
        {sheets.map((sheet, i) => (
          <clipPath id={`town${i}`} key={i}><path d={`${sheet.areas.urban}${sheet.areas.works || ""}`} /></clipPath>
        ))}
      </defs>
      <rect x="65" y="414" width="1717" height="500" fill="#f4f1ee" />
      {sheets.map((sheet, i) => (
        <Sheet sheet={sheet} key={i}>
          <g clipPath="url(#frame)">
            {["urban", "works", "light"].map((k) => sheet.areas[k] && <path key={k} d={sheet.areas[k]} fill={areaFill[k]} />)}
            <g clipPath={`url(#town${i})`}>
              <path d={nets[i]} fill="none" stroke="#ccc8c6" strokeWidth="2.4" />
            </g>
            {areaOrder.map((k) => sheet.areas[k] && (
              <path key={k} d={sheet.areas[k]} fill={areaFill[k]} stroke={k === "pitch" ? "#5dbf9f" : "none"} strokeWidth="2" />
            ))}
          </g>
        </Sheet>
      ))}
      {lineOrder.map((kind) => lineStyle[kind].map(([color, width, dash], pass) => (
        <g key={kind + pass}>
          {sheets.map((sheet, i) => sheet.lines[kind] && (
            <Sheet sheet={sheet} key={i}>
              <path d={sheet.lines[kind]} fill="none" stroke={color} strokeWidth={width} strokeDasharray={dash} strokeLinejoin="round" />
            </Sheet>
          ))}
        </g>
      )))}
      <rect x="299" y="758" width="8" height="9" fill="none" stroke="#a02fd0" strokeDasharray="3 2" />
      {sheets.map((sheet, i) => (
        <Sheet sheet={sheet} key={i}>
          {sheet.labels.map(([x, y, text, kind, turn], n) => (
            <Label key={n} x={x} y={y} $kind={kind} transform={turn ? `rotate(${turn} ${x} ${y - 9})` : undefined}>{text}</Label>
          ))}
          {sheet.shields.map(([x, y, text, kind], n) => <Shield key={n} x={x} y={y} text={text} kind={kind} />)}
        </Sheet>
      ))}
      <g filter="url(#soft)" opacity="0.34">
        {pins.map(([x, y], n) => (
          <path key={n} d={`M${x},${y + 27}L${x + 7},${y + 6}Q${x + 16},${y - 5} ${x + 24},${y + 1}Q${x + 26},${y + 9} ${x + 13},${y + 18}Z`} fill="#222" />
        ))}
      </g>
    </MapDrawing>
  );
}

function Pin({ x, y }) {
  return (
    <PinButton
      type="button"
      aria-label="Aire de jeux"
      style={{ left: `${((x - 65) / 1717) * 100}%`, top: y - 414 }}
    >
      <svg width="25" height="41" viewBox="0 0 25 41">
        <path d="M12.5,0.8C5.8,0.8 0.7,6 0.7,12.5C0.7,16.2 2.3,19 4.2,22.4C7,27.6 10.6,33.5 12.5,39.8C14.4,33.5 18,27.6 20.8,22.4C22.7,19 24.3,16.2 24.3,12.5C24.3,6 19.2,0.8 12.5,0.8Z" fill="url(#pinFill)" stroke="#2e6c97" strokeWidth="1" />
        <path d="M12.5,2.1C6.6,2.1 2,6.7 2,12.5C2,16 3.6,18.7 5.4,22C8,26.8 10.9,31.5 12.5,36.4C14.1,31.5 17,26.8 19.6,22C21.4,18.7 23,16 23,12.5C23,6.7 18.4,2.1 12.5,2.1Z" fill="none" stroke="#fff" strokeOpacity="0.22" />
        <circle cx="12.5" cy="13" r="4.6" fill="#fff" stroke="#2a6da5" strokeWidth="0.8" />
      </svg>
    </PinButton>
  );
}

const HiddenDefs = styled.svg`
  position: absolute;
  width: 0;
  height: 0;
`;

function PinGradient() {
  return (
    <HiddenDefs aria-hidden="true">
      <defs>
        <linearGradient id="pinFill" x1="0" y1="0" x2="0" y2="1">
          <stop offset="0" stopColor="#3f8fca" />
          <stop offset="0.5" stopColor="#257fc6" />
          <stop offset="1" stopColor="#126fc6" />
        </linearGradient>
      </defs>
    </HiddenDefs>
  );
}

/* ---------- content ---------- */

const navItems = ["Accueil", "Aires de jeux pour enfants", "Toilettes publiques", "Parkings publics"];

const districts = [
  ["Bordeaux Maritime", ["Jardin de ta soeur", "Parc de la Cité des Aubiers_Bâtiment", "Parc de Bacalan", "Square Etienne Morin", "Square docteur Roger Hypoustéguy", "Jardin du clown Chocolat", "Aire de jeux du Lauzun", "Parc Chantecrit_Moyens", "Parc du Port de la Lune", "Place Adolphe Buscaillet", "Parc Chantecrit_Petits"]],
  ["Chartrons - Grand Parc - Jardin Public", ["Square de l'Europe", "Parc de la Cité du Grand Parc_Moyens", "quai des Chartrons-Arnozan_Aire de jeux", "Parc de la Cité du Grand Parc_Maryse Bastié", "Jardin Public_Muséum", "Square Charazac", "quai des Chartrons-Martinique_Aire de jeux", "Jardin Public_Ile aux enfants", "Parc de la Cité du Grand Parc_Petits", "Parc Rivière", "Parc de la Cité du Grand Parc_Grands"]],
  ["Centre ville", ["Square Jean Bureau", "Square Vinet", "Jardin de la Visitation", "Jardin de la Mairie", "Place des Martyrs de la Résistance", "Square Georges Mandel", "Esplanade Charles de Gaulle"]],
  ["Saint Augustin - Tauzin - Alphonse Dupeux", ["Square Emile Combes-Jean Gautier", "Jardin Saint Julien"]],
  ["Nansouty - Saint Genès", ["Jardin de la Croix du Sud", "Jardin des Dames de la Foi", "Jardin des Barrières"]],
  ["Bordeaux Sud", ["Jardin Brascassat", "Jardin de la Porcelaine", "Parc des Sports Saint Michel"]],
];

export default function App() {
  return (
    <>
      <GlobalStyle />
      <Page>
        <Header>
          <SiteName>Le blog des quartiers</SiteName>
          <Nav aria-label="Navigation principale">
            {navItems.map((item) => <NavLink key={item} href="#">{item}</NavLink>)}
          </Nav>
        </Header>
        <main>
          <Banner>
            <BannerTitle>Aires de jeux pour enfants</BannerTitle>
          </Banner>
          <MapBox aria-label="Carte">
            <PinGradient />
            <CityMap />
            {pins.map(([x, y], n) => <Pin key={n} x={x} y={y} />)}
            <ZoomBar>
              <ZoomButton type="button" aria-label="Zoom avant">+</ZoomButton>
              <ZoomButton type="button" aria-label="Zoom arrière">−</ZoomButton>
            </ZoomBar>
            <Credits>
              <a href="#">Leaflet</a> | Imagery from <a href="#">GIScience Research Group @ University of Heidelberg</a> — Map data © <a href="#">OpenStreetMap</a>
            </Credits>
          </MapBox>
          <Columns>
            {districts.map(([name, places]) => (
              <Card key={name}>
                <CardTitle>{name}</CardTitle>
                <Places>
                  {places.map((place) => <Place key={place}>{place}</Place>)}
                </Places>
              </Card>
            ))}
          </Columns>
        </main>
      </Page>
    </>
  );
}
